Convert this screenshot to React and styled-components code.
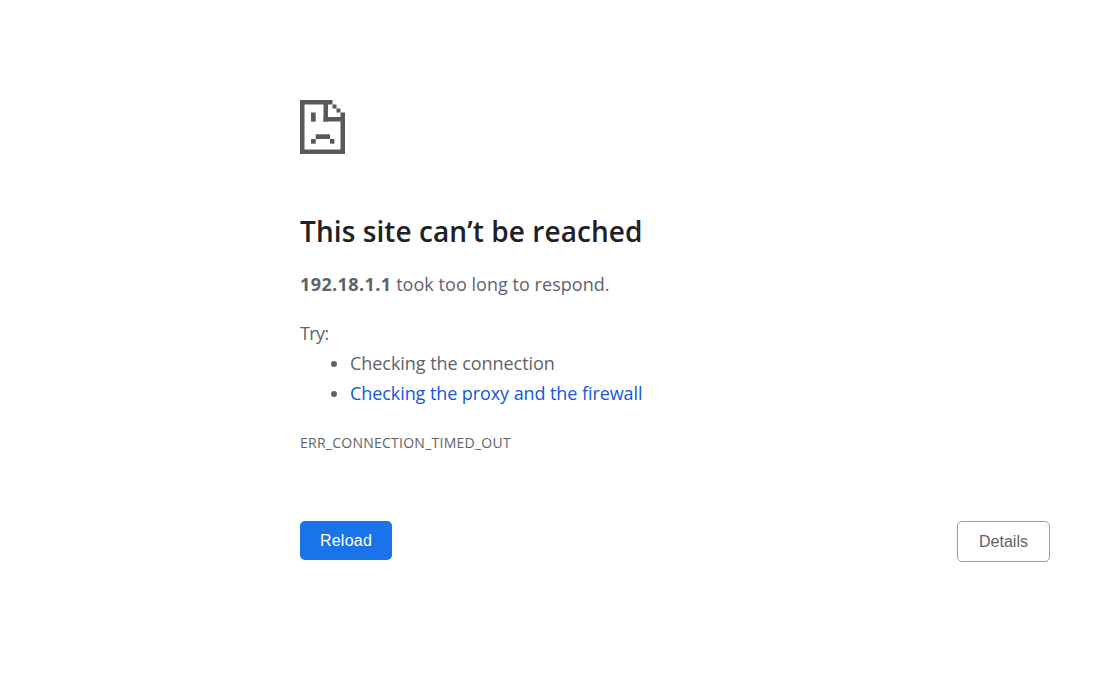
import styled, { createGlobalStyle } from 'styled-components'

const GlobalStyle = createGlobalStyle`
    html, body {
        margin: 0;
        padding: 0;
        background: #fff;
    }
    body {
        font-family: "Open Sans", "Noto Sans", sans-serif;
    }
`

const Page = styled.main`
    box-sizing: border-box;
    width: 1110px;
    height: 674px;
    padding: 100px 60px 0 300px;
    overflow: hidden;
`

const IconWrap = styled.div`
    width: 45px;
    height: 54px;
    margin-bottom: 59px;
    svg { display: block; }
`

const Title = styled.h1`
    margin: 0 0 20px;
    font-size: 28px;
    line-height: 36px;
    font-weight: 600;
    letter-spacing: 0.08px;
    color: #202124;
`

const Message = styled.p`
    margin: 0 0 21px;
    font-size: 18px;
    line-height: 30px;
    letter-spacing: 0.04px;
    color: #5f6368;
    strong {
        font-weight: 700;
        letter-spacing: 0.4px;
    }
`

const TryLabel = styled.p`
    margin: 0;
    font-size: 18px;
    line-height: 26px;
    letter-spacing: -0.6px;
    color: #5f6368;
`

const Suggestions = styled.ul`
    margin: 0 0 25px;
    padding: 2px 0 0 50px;
    list-style: disc;
    color: #5f6368;
`

const Suggestion = styled.li`
    font-size: 18px;
    line-height: 30px;
    letter-spacing: -0.05px;
    color: #5f6368;
    a {
        color: #1558d6;
        text-decoration: none;
        letter-spacing: -0.08px;
    }
`

const ErrorCode = styled.div`
    font-size: 14px;
    line-height: 20px;
    letter-spacing: 0.25px;
    color: #5f6368;
`

const Actions = styled.div`
    display: flex;
    justify-content: space-between;
    align-items: flex-start;
    margin-top: 68px;
`

const Button = styled.button`
    box-sizing: border-box;
    height: ${props => props.$primary ? '39px' : '41px'};
    width: ${props => props.$primary ? '92px' : '93px'};
    padding: 0;
    border-radius: 5px;
    border: ${props => props.$primary ? 'none' : '1px solid #9aa0a6'};
    background: ${props => props.$primary ? '#1a73e8' : '#fff'};
    color: ${props => props.$primary ? '#fff' : '#5f6368'};
    font-family: "Liberation Sans", Arial, sans-serif;
    font-size: 16px;
    letter-spacing: ${props => props.$primary ? '0.25px' : '0'};
`

const SadPage = () => (
    <svg width="45" height="54" viewBox="0 0 45 54" fill="#595959" role="img" aria-label="Sad page">
        <rect x="0" y="0" width="4.5" height="54" />
        <rect x="0" y="49.5" width="45" height="4.5" />
        <rect x="40.5" y="17" width="4.5" height="37" />
        <rect x="0" y="0" width="32.5" height="4.5" />
        <rect x="23.5" y="0" width="4.5" height="21.5" />
        <rect x="23.5" y="17" width="21.5" height="4.5" />
        <rect x="32.5" y="4.5" width="4" height="4" />
        <rect x="36.5" y="8.5" width="4" height="4" />
        <rect x="40.5" y="12.5" width="4.5" height="4.5" />
        <rect x="11" y="12.5" width="4.7" height="9.2" />
        <rect x="11" y="39" width="4.7" height="4.7" />
        <rect x="15.7" y="34.3" width="14.3" height="4.7" />
        <rect x="30" y="39" width="4.4" height="4.7" />
    </svg>
)

const App = () => {
    return (
        <>
            <GlobalStyle />
            <Page>
                <IconWrap><SadPage /></IconWrap>
                <Title>This site can’t be reached</Title>
                <Message><strong>192.18.1.1</strong> took too long to respond.</Message>
                <TryLabel>Try:</TryLabel>
                <Suggestions>
                    <Suggestion>Checking the connection</Suggestion>
                    <Suggestion><a href="#proxy">Checking the proxy and the firewall</a></Suggestion>
                </Suggestions>
                <ErrorCode>ERR_CONNECTION_TIMED_OUT</ErrorCode>
                <Actions>
                    <Button $primary>Reload</Button>
                    <Button>Details</Button>
                </Actions>
            </Page>
        </>
    )
}

export default App
